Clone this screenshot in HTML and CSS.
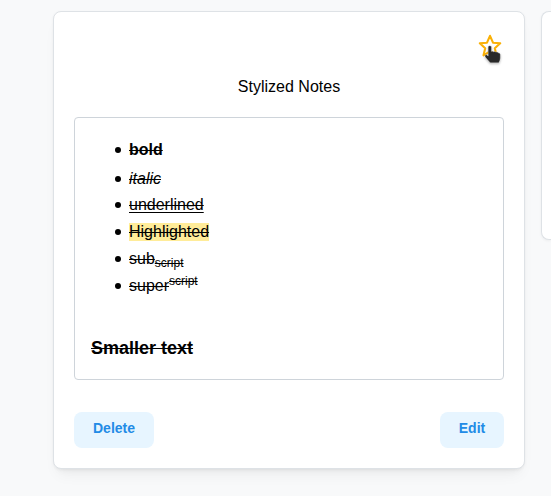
FILE: index.html
```html
<!DOCTYPE html>
<html lang="en">
<head>
<meta charset="utf-8">
<title>Stylized Notes</title>
<link rel="stylesheet" href="styles.css">
</head>
<body>
<main class="board">
  <article class="card note">
    <div class="toolbar">
      <div class="favorite">
        <svg class="star" width="24" height="24" viewBox="0 0 24 24"><path d="M12 1.8 15 8.7 22.2 9.3 16.8 14.2 18.5 21.3 12 17.5 5.5 21.3 7.2 14.2 1.8 9.3 9 8.7Z" fill="none" stroke="#fab005" stroke-width="2.1" stroke-linejoin="round"/></svg>
        <svg class="pointer" width="18" height="20" viewBox="0 0 18 20"><path d="M4.2 1.5Q5.8-.1 7.4 1.5V6.5Q8.5 5.7 9.6 6.7 11 6 12 7.1 13.5 6.5 14.3 7.8 16.3 7.8 16.3 9.5V13Q16.3 15.5 14.8 17.8H6.2L1.2 12Q.3 9.4 2.5 9.7L4.2 11Z" fill="#292929" stroke="#fff" stroke-width=".3"/></svg>
      </div>
    </div>
    <h1 class="title">Stylized Notes</h1>
    <section class="content">
      <ul class="list">
        <li class="first"><s><b>bold</b></s></li>
        <li class="slanted"><s><i>italic</i></s></li>
        <li><span class="underlined">underlined</span></li>
        <li><mark>Highlighted</mark></li>
        <li><s>sub</s><sub><s>script</s></sub></li>
        <li><s>super</s><sup><s>script</s></sup></li>
      </ul>
      <h2 class="small-heading"><s>Smaller text</s></h2>
    </section>
    <footer class="actions">
      <button class="button">Delete</button>
      <button class="button edit">Edit</button>
    </footer>
  </article>
  <article class="card neighbor"></article>
</main>
</body>
</html>
```
FILE: styles.css
```css
* { box-sizing: border-box; }
body {
  margin: 0;
  height: 496px;
  overflow: hidden;
  background: #f8f9fa;
  color: #000;
  font: 16px/24px "Liberation Sans", Arial, sans-serif;
}
.board {
  display: flex;
  align-items: flex-start;
  gap: 16px;
  height: 496px;
  overflow: hidden;
  padding: 11px 0 0 53px;
}
.card {
  flex: none;
  width: 472px;
  border: 1px solid #dee2e6;
  border-radius: 8px;
  background: #fff;
  box-shadow: 0 1px 3px rgba(0, 0, 0, .05), 0 10px 15px -5px rgba(0, 0, 0, .05), 0 7px 7px -5px rgba(0, 0, 0, .04);
}
.note { height: 458px; padding: 20px; }
.neighbor { flex: 1; width: auto; height: 229px; border-right: 0; border-radius: 8px 0 0 8px; }
.toolbar { display: flex; justify-content: flex-end; height: 43px; padding: 2px 2px 0 0; }
.favorite { position: relative; width: 24px; height: 24px; }
.star { display: block; }
.pointer { position: absolute; left: 6px; top: 11px; filter: drop-shadow(0 1px 1px rgba(0, 0, 0, .3)); }
.title { margin: 0; font-size: 16px; font-weight: 400; text-align: center; }
.content {
  height: 263px;
  margin-top: 18px;
  padding: 20px 16px 0;
  border: 1px solid #ced4da;
  border-radius: 4px;
}
.list { margin: 0; padding: 0 0 0 38px; list-style: none; }
.list li { position: relative; height: 27px; }
.list li::before {
  content: "";
  position: absolute;
  left: -14px;
  top: 9px;
  width: 6px;
  height: 6px;
  border-radius: 50%;
  background: #000;
}
.list .first { height: 29px; }
.list .slanted { height: 26px; }
.underlined { text-decoration: underline line-through; text-decoration-skip-ink: none; text-underline-offset: 2px; }
mark { padding-bottom: 1px; background: #ffec99; color: inherit; text-decoration: line-through; }
sub, sup { position: relative; font-size: 12px; line-height: 0; vertical-align: baseline; }
sub { bottom: -3px; }
sup { top: -6px; }
.small-heading { margin: 34px 0 0; font-size: 18px; line-height: 26px; }
.actions { display: flex; justify-content: space-between; margin-top: 32px; }
.button {
  width: 80px;
  height: 36px;
  padding: 0 0 5px;
  border: 0;
  border-radius: 8px;
  background: #e7f5ff;
  color: #228be6;
  font: 600 14px/20px "Liberation Sans", Arial, sans-serif;
}
.edit { width: 64px; }
```
